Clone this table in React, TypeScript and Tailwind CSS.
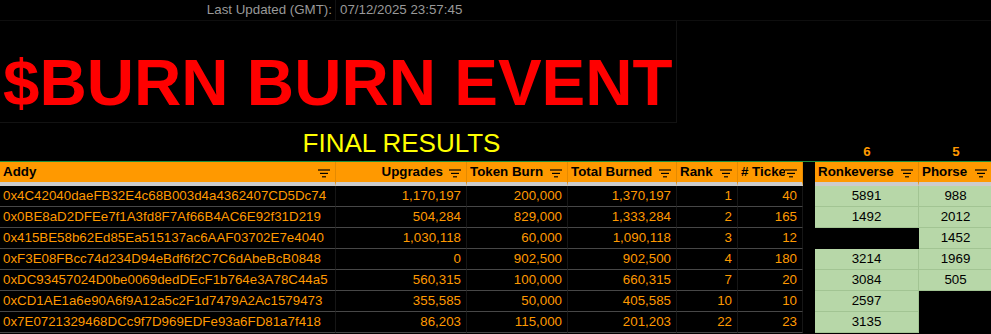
import React from 'react'

const rows = [
  { addy: '0x4C42040daeFB32E4c68B003d4a4362407CD5Dc74', upgrades: '1,170,197', token: '200,000', total: '1,370,197', rank: '1', tickets: '40', ronke: '5891', phorse: '988' },
  { addy: '0x0BE8aD2DFEe7f1A3fd8F7Af66B4AC6E92f31D219', upgrades: '504,284', token: '829,000', total: '1,333,284', rank: '2', tickets: '165', ronke: '1492', phorse: '2012' },
  { addy: '0x415BE58b62Ed85Ea515137ac6AAF03702E7e4040', upgrades: '1,030,118', token: '60,000', total: '1,090,118', rank: '3', tickets: '12', ronke: '', phorse: '1452' },
  { addy: '0xF3E08FBcc74d234D94eBdf6f2C7C6dAbeBcB0848', upgrades: '0', token: '902,500', total: '902,500', rank: '4', tickets: '180', ronke: '3214', phorse: '1969' },
  { addy: '0xDC93457024D0be0069dedDEcF1b764e3A78C44a5', upgrades: '560,315', token: '100,000', total: '660,315', rank: '7', tickets: '20', ronke: '3084', phorse: '505' },
  { addy: '0xCD1AE1a6e90A6f9A12a5c2F1d7479A2Ac1579473', upgrades: '355,585', token: '50,000', total: '405,585', rank: '10', tickets: '10', ronke: '2597', phorse: '' },
  { addy: '0x7E0721329468DCc9f7D969EDFe93a6FD81a7f418', upgrades: '86,203', token: '115,000', total: '201,203', rank: '22', tickets: '23', ronke: '3135', phorse: '' },
]

function FilterIcon() {
  return (
    <svg width="12" height="12" viewBox="0 0 12 12" className="shrink-0 mt-[2px]">
      <line x1="0" y1="3" x2="12" y2="3" stroke="#000" strokeWidth="1.2" />
      <line x1="2" y1="6.4" x2="10" y2="6.4" stroke="#000" strokeWidth="1.2" />
      <line x1="4" y1="9.8" x2="8" y2="9.8" stroke="#000" strokeWidth="1.2" />
    </svg>
  )
}

function HeadCell({ label, right, tight }: { label: string; right?: boolean; tight?: boolean }) {
  return (
    <div className={`h-[24px] bg-[#ff9900] border-b-4 border-b-[#cccccc] border-r border-r-[#e58a00] flex items-center pl-[3px] pr-[5px] ${tight ? 'gap-0' : 'gap-[6px]'}`}>
      <span className={`flex-1 overflow-hidden whitespace-nowrap font-bold text-black ${right ? 'text-right' : 'text-left'}`}>
        {label}
      </span>
      <FilterIcon />
    </div>
  )
}

function DarkCell({ children, left }: { children: React.ReactNode; left?: boolean }) {
  return (
    <div
      className={`h-[21px] border-b border-b-[#474747] border-r border-r-[#161616] flex items-center text-[#ff9900] whitespace-nowrap overflow-hidden ${left ? 'pl-[3px]' : 'justify-end pr-[5px]'}`}
    >
      {children}
    </div>
  )
}

function GreenCell({ value }: { value: string }) {
  if (!value) return <div className="h-[21px] bg-black" />
  return (
    <div className="h-[21px] bg-[#b7d7a8] border-b border-r border-[#a2c493] flex items-center justify-center text-black">
      {value}
    </div>
  )
}

export default function App() {
  return (
    <div className="w-[991px] h-[334px] overflow-hidden bg-black text-[13.33px] font-['Liberation_Sans',Arial,sans-serif]">
      <div className="grid grid-cols-[336px_131px_101px_109px_61px_65px_12px_104px_74px]">
        {/* last updated row */}
        <div className="h-[21px] flex items-center justify-end pr-[3px] text-[#999999] border-r border-r-[#121212] border-b border-b-[#0e0e0e]">
          Last Updated (GMT):
        </div>
        <div className="h-[21px] flex items-center pl-[4px] text-[#999999] whitespace-nowrap border-b border-b-[#0e0e0e]">
          07/12/2025 23:57:45
        </div>
        <div className="col-span-7 border-b border-b-[#0e0e0e]" />

        {/* title */}
        <div className="col-span-4 h-[102px] flex items-end pl-[3px] pb-[2px] border-r border-r-[#121212] border-b border-b-[#121212]">
          <span className="text-[65.5px] font-bold text-[#ff0000] leading-[74px] whitespace-nowrap">$BURN BURN EVENT</span>
        </div>
        <div className="col-span-5" />

        {/* final results */}
        <div className="col-span-6 h-[38px] flex items-end justify-center pb-[3px]">
          <span className="text-[26px] text-[#ffff00] leading-[30px]">FINAL RESULTS</span>
        </div>
        <div />
        <div className="h-[38px] flex items-end justify-center pb-[2px] font-bold text-[#ff9900] leading-[15px]">6</div>
        <div className="h-[38px] flex items-end justify-center pb-[2px] font-bold text-[#ff9900] leading-[15px]">5</div>

        {/* green line */}
        <div className="col-span-9 h-px bg-[#1e8e3e]" />

        {/* header */}
        <HeadCell label="Addy" />
        <HeadCell label="Upgrades" right />
        <HeadCell label="Token Burn" />
        <HeadCell label="Total Burned" />
        <HeadCell label="Rank" />
        <HeadCell label="# Tickets" tight />
        <div className="h-[24px] bg-black" />
        <HeadCell label="Ronkeverse" />
        <HeadCell label="Phorse" />

        {/* data */}
        {rows.map((r) => (
          <React.Fragment key={r.addy}>
            <DarkCell left>{r.addy}</DarkCell>
            <DarkCell>{r.upgrades}</DarkCell>
            <DarkCell>{r.token}</DarkCell>
            <DarkCell>{r.total}</DarkCell>
            <DarkCell>{r.rank}</DarkCell>
            <DarkCell>{r.tickets}</DarkCell>
            <div className="h-[21px] bg-black" />
            <GreenCell value={r.ronke} />
            <GreenCell value={r.phorse} />
          </React.Fragment>
        ))}
      </div>
    </div>
  )
}
